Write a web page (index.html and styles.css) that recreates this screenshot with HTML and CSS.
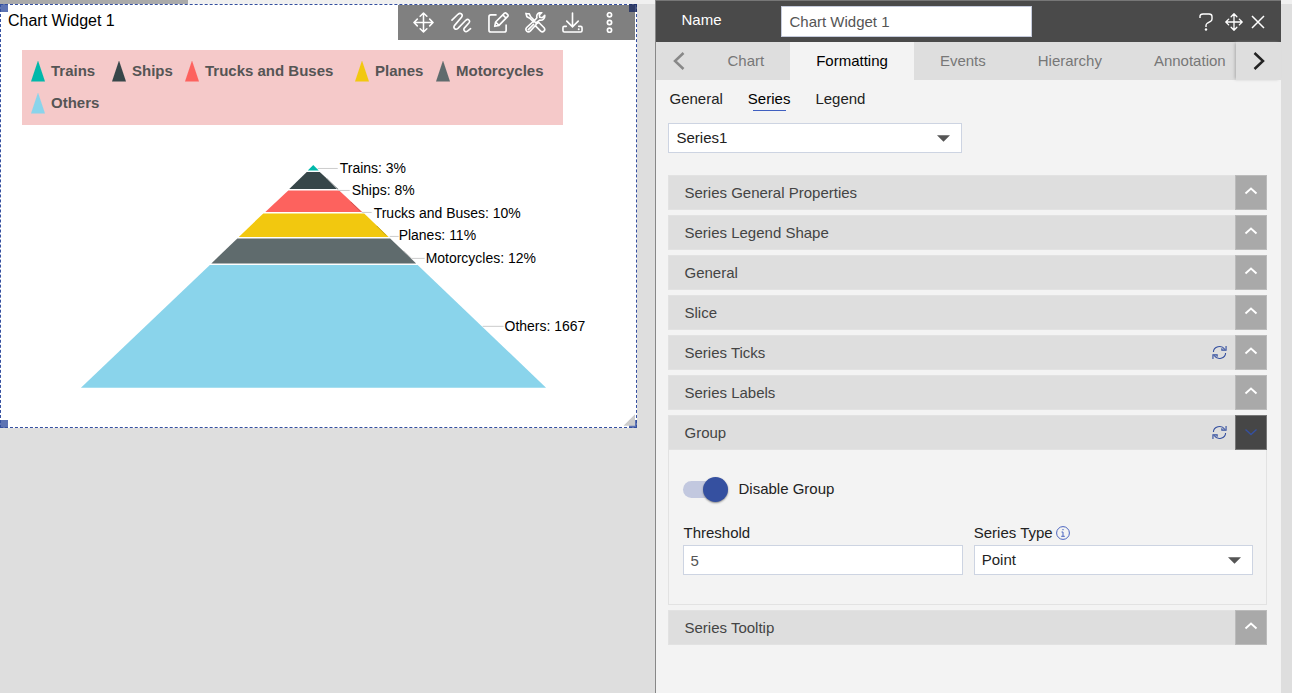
FILE: index.html
```html
<!DOCTYPE html>
<html lang="en">
<head>
<meta charset="utf-8">
<title>Chart Widget 1</title>
<link rel="stylesheet" href="styles.css">
</head>
<body>
<svg class="defs" aria-hidden="true">
  <symbol id="up" viewBox="0 0 14 8"><path d="M1.500 6.500 7 1.500l5.500 5" fill="none" stroke="currentColor" stroke-width="1.900"/></symbol>
  <symbol id="down" viewBox="0 0 14 8"><path d="M1.500 1.500 7 6.500l5.500-5" fill="none" stroke="currentColor" stroke-width="1.400"/></symbol>
  <symbol id="caret" viewBox="0 0 14 7"><path d="M0 0h14L7 7z" fill="currentColor"/></symbol>
  <symbol id="move" viewBox="0 0 22 22"><path d="M11 1.500v19M1.500 11h19M7.500 4.500 11 1l3.500 3.500M7.500 17.500 11 21l3.500-3.500M4.500 7.500 1 11l3.500 3.500M17.500 7.500 21 11l-3.500 3.500" fill="none" stroke="currentColor" stroke-width="1.600" stroke-linecap="round" stroke-linejoin="round"/></symbol>
  <symbol id="refresh" viewBox="0 0 16 16"><path d="M1.500 7.500A6.500 6 0 0 1 13.500 4.500M15 1v4.500h-4.500V3.500M14.500 8.500A6.500 6 0 0 1 2.500 11.500M1 15v-4.500h4.500v2" fill="none" stroke="currentColor" stroke-width="1.200"/></symbol>
</svg>
<main class="app">
  <div class="workspace">
    <div class="scroll-track"><div class="scroll-thumb"></div></div>
    <section class="widget">
      <h1 class="widget-title">Chart Widget 1</h1>
      <div class="toolbar">
        <button class="tool" aria-label="Move"><svg><use href="#move"/></svg></button>
        <button class="tool" aria-label="Style"><svg viewBox="0 0 22 22"><path d="M1 8.500 7.300 2.400c2.600-2.300 5.800.4 3.700 3.100L3.800 14c-2 2.600.8 5.400 3.500 3.200l8.200-8.500c2.500-2.200 5.200.4 3.200 2.900l-4.500 5c-1.900 2.500.8 5 3.100 3.500l3.200-2.600" fill="none" stroke="currentColor" stroke-width="1.700" stroke-linecap="round"/></svg></button>
        <button class="tool" aria-label="Edit"><svg viewBox="0 0 22 22"><path d="M9 3H3Q1 3 1 5v14q0 2 2 2h14q2 0 2-2v-6M7 15l1-4.500L17.300 1.200q1-.7 2 .2l1.300 1.300q.9 1 .1 1.900L11.500 14zM15.500 3l3.500 3.500M8 10.500 11.500 14" fill="none" stroke="currentColor" stroke-width="1.700" stroke-linejoin="round"/></svg></button>
        <button class="tool" aria-label="Tools"><svg viewBox="0 0 22 22"><path d="M1 1.500 4.500 2 6 5l4 4M1 1.500 2 5l3 1.500 4 4M12.500 12l2-1L20 16.500q1.500 2-.2 3.500-1.600 1.500-3.400 0L11 14.500l1-2.500-3-3M9 13l-5.500 5.500M8 10.500 2 16q-2 2-.3 4 2 1.700 4-.2l5.300-6M12 11l3.500-2.500c3 .8 5.500-1.500 5.200-5L18 6l-2.500-.5L15 3l2.500-2.300c-3.500-.6-6 2-5 5.300L10 9" fill="none" stroke="currentColor" stroke-width="1.700" stroke-linecap="round" stroke-linejoin="round"/></svg></button>
        <button class="tool" aria-label="Download"><svg viewBox="0 0 22 22"><path d="M11 1v14M5 9.500l6 6 6-6M4.500 15H2.500Q1 15 1 16.500v3Q1 21 2.500 21h17q1.500 0 1.500-1.500v-3q0-1.500-1.500-1.500h-2" fill="none" stroke="currentColor" stroke-width="1.700" stroke-linecap="round"/><circle cx="17.500" cy="18" r="1" fill="currentColor"/></svg></button>
        <button class="tool" aria-label="More"><svg viewBox="0 0 22 22" fill="none" stroke="currentColor" stroke-width="1.800"><circle cx="11" cy="3" r="2.200"/><circle cx="11" cy="11" r="2.200"/><circle cx="11" cy="19" r="2.200"/></svg></button>
      </div>
      <ul class="legend">
        <li class="teal"><i class="mark"></i>Trains</li>
        <li class="dark"><i class="mark"></i>Ships</li>
        <li class="red"><i class="mark"></i>Trucks and Buses</li>
        <li class="yellow"><i class="mark"></i>Planes</li>
        <li class="gray"><i class="mark"></i>Motorcycles</li>
        <li class="sky"><i class="mark"></i>Others</li>
      </ul>
      <svg class="pyramid" viewBox="0 0 636 302" role="img" aria-label="Pyramid chart of transport series">
        <path fill="#01b8aa" d="M312.500 40 318 45.500h-11z"/>
        <path fill="#374649" d="M306 47h13L337.500 64h-49z"/>
        <path fill="#fd625e" d="M287.500 65.500h51L361.500 87h-97z"/>
        <path fill="#f2c80f" d="M262.500 88.500h101L388 112H238z"/>
        <path fill="#5f6b6d" d="M236.500 113.500h153L415.500 138.500h-205z"/>
        <path fill="#8ad4eb" d="M209 140h208L545.500 263H80z"/>
        <g fill="none" stroke="#ccc">
          <path d="M317 43.500h20M326 53l12 12.500h11M361 87.500h10M389 111.500h9M403 126l8 7.500h13M482 201.500h21"/>
        </g>
        <g fill="none"><path d="M350 77l9.500 9.500" stroke="#ce5451"/><path d="M376 101l9.500 9.500" stroke="#c6a61c"/></g>
        <g class="slice-labels">
          <text x="339" y="48">Trains: 3%</text>
          <text x="351" y="70">Ships: 8%</text>
          <text x="373" y="93">Trucks and Buses: 10%</text>
          <text x="398" y="115">Planes: 11%</text>
          <text x="425" y="138">Motorcycles: 12%</text>
          <text x="504" y="206">Others: 1667</text>
        </g>
      </svg>
      <span class="handle top left"></span>
      <span class="handle top right"></span>
      <span class="handle bottom left"></span>
      <span class="handle bottom right"></span>
      <span class="grip"></span>
    </section>
  </div>
  <aside class="panel">
    <header class="panel-head">
      <label class="name-label" for="name">Name</label>
      <input class="name-input" id="name" value="Chart Widget 1">
      <div class="head-actions">
        <button class="help-button" aria-label="Help"><svg class="help" viewBox="0 0 14 18"><path d="M1 5V3.500Q1 1 4 1h6q3 0 3 2.500V6q0 1.500-1.500 2.500L8.500 10Q7 11 7 12.500V14" fill="none" stroke="currentColor" stroke-width="1.400"/><circle cx="7" cy="16.500" r="1.200" fill="currentColor"/></svg></button>
        <button aria-label="Move panel"><svg class="drag"><use href="#move"/></svg></button>
        <button aria-label="Close"><svg class="close" viewBox="0 0 14 14"><path d="M1 1l12 12M13 1 1 13" stroke="currentColor" stroke-width="1.500"/></svg></button>
      </div>
    </header>
    <nav class="tabs">
      <button class="arrow prev" aria-label="Previous tabs"><svg viewBox="0 0 12 18"><path d="M10.500 1 2 9l8.500 8" fill="none" stroke="currentColor" stroke-width="2.500"/></svg></button>
      <div class="tab-list">
        <button class="tab">Chart</button>
        <button class="tab active">Formatting</button>
        <button class="tab">Events</button>
        <button class="tab">Hierarchy</button>
        <button class="tab">Annotation</button>
      </div>
      <button class="arrow next" aria-label="Next tabs"><svg viewBox="0 0 12 18"><path d="M1.500 1 10 9l-8.500 8" fill="none" stroke="currentColor" stroke-width="2.500"/></svg></button>
    </nav>
    <div class="panel-body">
      <nav class="subtabs">
        <button class="subtab">General</button>
        <button class="subtab current">Series</button>
        <button class="subtab">Legend</button>
      </nav>
      <div class="select series-select">
        <select aria-label="Series"><option>Series1</option></select>
        <svg class="caret"><use href="#caret"/></svg>
      </div>
      <div class="accordion">
        <section><header class="bar"><h2>Series General Properties</h2><button class="expand" aria-label="Expand Series General Properties"><svg><use href="#up"/></svg></button></header></section>
        <section><header class="bar"><h2>Series Legend Shape</h2><button class="expand" aria-label="Expand Series Legend Shape"><svg><use href="#up"/></svg></button></header></section>
        <section><header class="bar"><h2>General</h2><button class="expand" aria-label="Expand General"><svg><use href="#up"/></svg></button></header></section>
        <section><header class="bar"><h2>Slice</h2><button class="expand" aria-label="Expand Slice"><svg><use href="#up"/></svg></button></header></section>
        <section><header class="bar"><h2>Series Ticks</h2><button class="reset" aria-label="Reset Series Ticks"><svg><use href="#refresh"/></svg></button><button class="expand" aria-label="Expand Series Ticks"><svg><use href="#up"/></svg></button></header></section>
        <section><header class="bar"><h2>Series Labels</h2><button class="expand" aria-label="Expand Series Labels"><svg><use href="#up"/></svg></button></header></section>
        <section>
          <header class="bar"><h2>Group</h2><button class="reset" aria-label="Reset Group"><svg><use href="#refresh"/></svg></button><button class="expand open" aria-label="Collapse Group"><svg><use href="#down"/></svg></button></header>
          <div class="group-body">
            <label class="switch-row"><input class="switch" type="checkbox" checked>Disable Group</label>
            <div class="fields">
              <div class="field">
                <label for="threshold">Threshold</label>
                <input class="text-input" id="threshold" value="5">
              </div>
              <div class="field">
                <label for="type">Series Type<svg class="info" viewBox="0 0 14 14" fill="none" stroke="currentColor"><circle cx="7" cy="7" r="6.400"/><path d="M5.500 6H7v4.200M5.200 10.300h3.600M6.300 3.700h1.400"/></svg></label>
                <div class="select">
                  <select id="type"><option>Point</option></select>
                  <svg class="caret"><use href="#caret"/></svg>
                </div>
              </div>
            </div>
          </div>
        </section>
        <section><header class="bar"><h2>Series Tooltip</h2><button class="expand" aria-label="Expand Series Tooltip"><svg><use href="#up"/></svg></button></header></section>
      </div>
    </div>
  </aside>
  <div class="gutter"></div>
</main>
</body>
</html>
```
FILE: styles.css
```css
* { box-sizing: border-box; }
body { margin: 0; font: 15px/18px "Liberation Sans", Arial, sans-serif; color: #222; }
button { margin: 0; padding: 0; border: 0; background: none; font: inherit; color: inherit; cursor: pointer; }
input, select { font: inherit; }
svg { display: block; }
.defs { display: none; }

.app { display: flex; min-height: 100vh; background: #dedede; }
.workspace { flex: 656 1 0; min-width: 0; }
.scroll-track { height: 4px; background: #f0f0f0; }
.scroll-thumb { width: 188px; height: 4px; background: #aaa; }
.gutter { width: 11px; border-top: 4px solid #f0f0f0; }

/* Chart widget */
.widget { position: relative; margin-right: 18px; border: 1px dashed #3550a0; background: #fff; }
.widget-title { margin: 0; padding: 6px 7px 0; font-size: 16px; line-height: 20px; font-weight: 400; color: #000; }
.toolbar { position: absolute; top: 0; right: 1px; display: flex; padding: 0 7px 0 6px; background: #808080; color: #fff; }
.tool { display: grid; place-items: center; width: 37px; height: 35px; }
.tool:nth-child(-n+2) { width: 38px; }
.tool svg { width: 21px; height: 21px; }
.legend { display: grid; grid-template-columns: 81px 73px 170px 81px auto; row-gap: 10px; width: 541px; max-width: 100%; margin: 19px 0 0 21px; padding: 10px 9px 11px; list-style: none; background: #f5c9c9; font-weight: 700; line-height: 22px; color: #555; }
.legend li { display: flex; gap: 6px; align-items: center; white-space: nowrap; }
.mark { width: 14px; height: 21px; background: currentColor; clip-path: polygon(50% 0, 100% 100%, 0 100%); }
.teal .mark { background: #01b8aa; }
.dark .mark { background: #374649; }
.red .mark { background: #fd625e; }
.yellow .mark { background: #f2c80f; }
.gray .mark { background: #5f6b6d; }
.sky .mark { background: #8ad4eb; }
.pyramid { width: 100%; }
.slice-labels { font-size: 14px; fill: #000; }
.handle { position: absolute; width: 8px; height: 8px; background: #3550a0; opacity: .8; }
.top { top: -1px; }
.bottom { bottom: -1px; }
.left { left: -1px; }
.right { right: -1px; }
.top.right { background: #1b2a60; }
.grip { position: absolute; right: 1px; bottom: 1px; width: 12px; height: 12px; background: #ccc; clip-path: polygon(100% 0, 100% 100%, 0 100%); }

/* Properties panel */
.panel { flex: 625 1 0; min-width: 0; border-left: 1px solid #888; background: #f3f3f3; }
.panel-head { display: flex; align-items: center; height: 42px; padding: 0 16px 0 25px; border-top: 1px solid #777; background: #4a4a4a; color: #fff; }
.name-label { width: 100px; padding-bottom: 4px; }
.name-input { width: 251px; min-width: 0; height: 31px; padding: 0 7px; border: 1px solid #c5cbdc; background: #fff; color: #555; }
.head-actions { display: flex; align-items: center; gap: 8px; margin-left: auto; }
.help-button { margin-right: 4px; }
.help { width: 14px; height: 18px; }
.drag { width: 18px; height: 18px; }
.close { width: 14px; height: 14px; }
.tabs { display: flex; height: 38px; background: #dedede; color: #777; }
.arrow { display: grid; place-items: center; flex: none; width: 45px; }
.arrow svg { width: 12px; height: 18px; }
.prev { color: #888; }
.next { background: #dedede; box-shadow: -2px 0 3px -1px #aaa; color: #222; }
.tab-list { display: flex; flex: 1; min-width: 0; overflow: hidden; }
.tab { flex: none; padding: 0 26px; }
.active { background: #f3f3f3; color: #000; }
.panel-body { padding: 9px 14px 24px 12px; }
.subtabs { display: flex; gap: 24px; height: 22px; }
.subtab { display: flex; flex-direction: column; align-items: center; padding: 1px 0 0 1px; }
.current { color: #000; }
.current::after { content: ""; width: 33px; height: 1px; margin-top: 2px; background: #3f5fc0; }
.select { display: grid; align-items: center; }
.select > * { grid-area: 1 / 1; }
.select select { width: 100%; height: 30px; padding: 0 7px; border: 1px solid #cdd4e2; border-radius: 0; background: #fff; color: #222; appearance: none; }
.caret { justify-self: end; width: 13px; height: 7px; margin-right: 12px; color: #555; pointer-events: none; }
.series-select { width: 294px; max-width: 100%; margin-top: 12px; }
.accordion { display: grid; gap: 5px; margin-top: 22px; }
.bar { display: flex; height: 35px; border: 1px solid #e2e2e2; border-right: 0; background: #dedede; }
.bar h2 { flex: 1; margin: 0; padding-left: 15px; font-size: 15px; line-height: 34px; font-weight: 400; color: #444; }
.reset { display: grid; place-items: center; width: 32px; padding-bottom: 1px; color: #3550a0; }
.reset svg { width: 15px; height: 15px; }
.expand { display: grid; justify-items: center; align-content: start; width: 32px; margin: -1px 0; padding-top: 11px; border: 1px solid #bbb; background: #a9a9a9; color: #fff; }
.expand svg { width: 14px; height: 8px; }
.open { padding-top: 12px; border-color: #777; background: #464646; color: #3550a0; }
.group-body { padding: 25px 13px 29px 14px; border: 1px solid #e2e2e2; border-top: 0; }
.switch-row { display: flex; align-items: center; gap: 10px; height: 28px; }
.switch { position: relative; width: 45px; height: 17px; margin: 0; border-radius: 9px; background: #c2c8df; appearance: none; }
.switch::before { content: ""; position: absolute; top: -4px; right: 0; width: 25px; height: 25px; border-radius: 50%; background: #3550a0; box-shadow: 0 1px 2px #888; }
.fields { display: grid; grid-template-columns: 1fr 1fr; gap: 11px; margin-top: 20px; }
.field { display: grid; gap: 3px; align-content: start; }
.field label { display: flex; gap: 3px; align-items: center; height: 19px; }
.text-input { width: 100%; height: 30px; padding: 0 6px; border: 1px solid #cdd4e2; background: #fff; color: #555; }
.info { width: 14px; height: 14px; color: #4a64c0; }
```
